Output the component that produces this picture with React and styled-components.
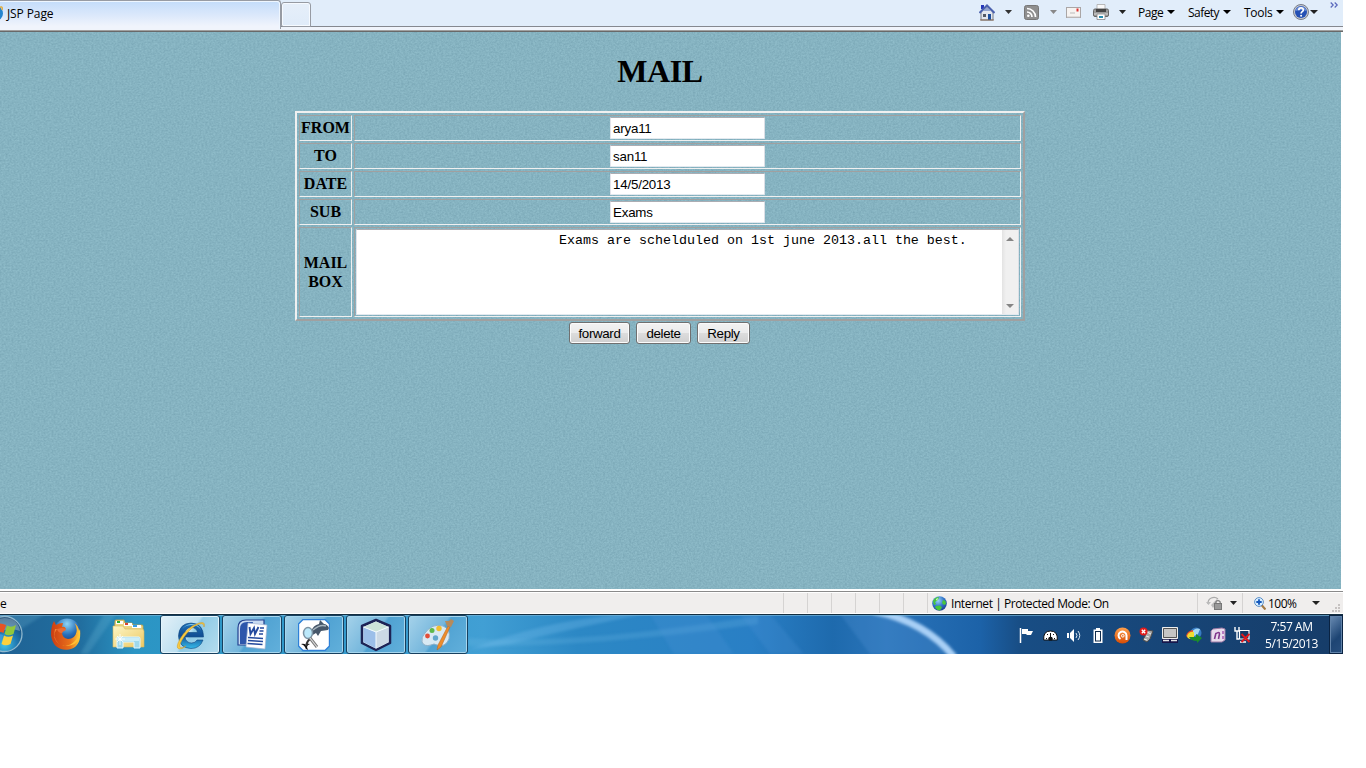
import React from 'react';
import styled, { createGlobalStyle } from 'styled-components';

const Global = createGlobalStyle`
  * { box-sizing: border-box; }
  body { margin: 0; background: #fff; overflow: hidden; }
  svg { display: block; flex: none; }
`;
const ui = '"Open Sans", "Noto Sans", sans-serif';

const Screen = styled.div`
  width: 1343px; height: 654px; display: flex; flex-direction: column; overflow: hidden;
  font-family: ${ui}; font-size: 12px; color: #000;
`;

/* Browser chrome */
const TabBar = styled.header`
  height: 32px; flex: none; display: flex; align-items: flex-start;
  background: linear-gradient(#e1edfa 0 26px, #85888f 26px 27px, #f0f4fb 27px 30px, #a0a0a0 30px 31px, #696969 31px 32px);
`;
const Tab = styled.div`
  width: 281px; height: 29px; display: flex; align-items: center; padding-bottom: 3px;
  border-top: 1px solid #979ba3; border-right: 1px solid #979ba3; border-top-right-radius: 3px;
  background: linear-gradient(#c3dcfa, #dbe8fb 50%, #f0f4fc 90%);
  box-shadow: inset -1px 1px #eef6ff;
`;
const TabTitle = styled.span`
  font-size: 12px; letter-spacing: -0.1px; margin-left: 4px;
`;
const NewTab = styled.div`
  width: 30px; height: 25px; margin-top: 2px; border: 1px solid #979ba3; border-radius: 3px 3px 0 2px;
  background: linear-gradient(#e6effa, #dfebf9); box-shadow: inset 0 0 0 1px #f6faff;
`;
const Tools = styled.nav`
  margin-left: auto; height: 26px; display: flex; align-items: center; padding-right: 4px;
`;
const Tool = styled.div`
  width: ${p => p.$w}px; height: 26px; display: flex; align-items: center; flex: none; margin-right: ${p => p.$mr || 0}px;
  padding-bottom: 2px; white-space: nowrap; letter-spacing: ${p => p.$ls || 0}px; justify-content: ${p => (p.$text ? 'space-between' : 'flex-start')};
`;
const Overflow = styled(Tool)` align-items: flex-start; padding-top: 2px; `;

/* Web page */
const Page = styled.main`
  height: 557px; flex: none; width: 1341px; padding: 21px 21px 0 0; position: relative;
  background: #86b3c1; font-family: "Liberation Serif", serif; font-size: 16px; text-align: center;
`;
const Weave = styled.svg`
  position: absolute; inset: 0; width: 1341px; height: 557px;
`;
const Body = styled.div` position: relative; `;
const Title = styled.h1` margin: 0; font-size: 32px; line-height: 37px; font-weight: bold; letter-spacing: -0.4px; `;
const MailTable = styled.table`
  margin: 21px auto 0; width: 730px; table-layout: fixed; border-collapse: separate; border-spacing: 2px;
  border: 2px solid; border-color: #f0f0f0 #a0a0a0 #a0a0a0 #f0f0f0;
`;
const Label = styled.th`
  width: 53px; padding: ${p => (p.$tall ? '1px 0' : '0 0 2px')}; height: ${p => (p.$tall ? 90 : 26)}px; line-height: 19px; font-size: 16px;
  border: 1px solid; border-color: #a0a0a0 #f0f0f0 #f0f0f0 #a0a0a0;
`;
const Cell = styled.td`
  padding: 1px; border: 1px solid; border-color: #a0a0a0 #f0f0f0 #f0f0f0 #a0a0a0;
`;
const Field = styled.input`
  display: block; margin: 0 0 0 254px; width: 155px; height: 22px; padding: 1px 2px; outline: 0; background: #fff;
  border: 1px solid; border-color: #abadb3 #dbdfe6 #e3e9ef #e2e3ea; border-radius: 1px;
  font: 13.333px "Liberation Sans", Arial, sans-serif; letter-spacing: -0.2px; color: #000;
`;
const MailBody = styled.div`
  height: 86px; display: flex; background: #fff; border: 1px solid; border-color: #abadb3 #dbdfe6 #e3e9ef #e2e3ea;
`;
const MailText = styled.pre`
  flex: 1; margin: 0; padding: 3px 2px; text-align: left; line-height: 15px;
  font-family: "Liberation Mono", "Courier New", monospace; font-size: 13.333px;
`;
const ScrollBar = styled.div`
  width: 16px; display: flex; flex-direction: column; justify-content: space-between; align-items: center;
  padding: 7px 0 6px; background: linear-gradient(90deg, #e3e3e3, #f0f0f0 25%, #f0f0f0);
`;
const Actions = styled.div`
  display: flex; justify-content: center; gap: 6px; margin-top: 1px; padding-right: 1px;
`;
const Button = styled.button`
  width: ${p => p.$w}px; height: 22px; padding: 0; border: 1px solid #707070; border-radius: 3px;
  background: linear-gradient(#f2f2f2, #ebebeb 49%, #dddddd 50%, #cfcfcf); box-shadow: inset 0 0 0 1px #fbfbfb;
  font: 13.333px "Liberation Sans", Arial, sans-serif; letter-spacing: -0.35px; color: #000;
`;

/* Status bar */
const Status = styled.footer`
  height: 25px; flex: none; display: flex; padding-top: 4px;
  background: linear-gradient(#fff 0 2px, #8a8a8a 2px 3px, #fff 3px 4px, #f0eeed 4px 24px, #fff 24px);
`;
const StatusCell = styled.div`
  height: 20px; width: ${p => p.$w}px; flex: none; display: flex; align-items: center; border-right: 1px solid #d5d3d2;
  white-space: nowrap; padding-left: ${p => p.$pl || 0}px; gap: ${p => p.$gap || 0}px; letter-spacing: ${p => p.$ls || 0}px;
  &:last-child { border-right: 0; }
`;
const ZoomValue = styled.span` width: 42px; `;
const Corner = styled.div` height: 20px; display: flex; align-items: flex-end; margin-left: 9px; `;

/* Taskbar */
const TaskBar = styled.footer`
  height: 40px; flex: none; display: flex; position: relative; overflow: hidden; background: #1f6fb4;
`;
const Wallpaper = styled.svg` position: absolute; inset: 0; `;
const TaskItems = styled.div` position: relative; display: flex; align-items: center; width: 1014px; `;
const Launcher = styled.div` width: ${p => p.$w}px; flex: none; display: flex; justify-content: ${p => p.$start ? 'flex-start' : 'center'}; `;
const TaskButton = styled.div`
  width: 60px; height: 39px; margin: 1px 2px 0 0; flex: none; display: flex; align-items: center; justify-content: center;
  border: 1px solid #17405f; border-radius: 3px;
  background: ${p => p.$active
    ? 'linear-gradient(125deg, #e4f1f8, #bcdff0 48%, #8fcbe6 52%, #b5dcee)'
    : 'linear-gradient(125deg, #a5d2ea, #74b6dc 48%, #50a2d2 52%, #62b0db)'};
  box-shadow: inset 0 0 0 1px ${p => (p.$active ? '#e3f4fc' : '#a6d6ee')};
`;
const Tray = styled.div` position: relative; display: flex; align-items: center; padding-top: 2px; width: 240px; `;
const TrayIcon = styled.div` width: 24px; height: 18px; display: flex; align-items: center; justify-content: center; `;
const Clock = styled.div`
  position: relative; width: 76px; color: #fff; text-align: center; line-height: 17px; padding: 4px 1px 0 0; font-size: 12px; letter-spacing: -0.45px;
`;
const ShowDesktop = styled.div`
  position: relative; width: 14px; height: 39px; margin: 1px 0 0 -1px; border: 1px solid #0a2342;
  box-shadow: inset 0 0 0 1px #5f81a8; background: linear-gradient(135deg, #6b8db4, #1d4473 60%, #284f7e);
`;

const Arrow = ({ fill = '#000', w = 7, up = false }) => (
  <svg width={w} height="4" viewBox="0 0 8 4" preserveAspectRatio="none"><path d={up ? 'M0 4h8L4 0z' : 'M0 0h8L4 4z'} fill={fill} /></svg>
);

const HomeIcon = () => (
  <svg width="16" height="17" viewBox="0 0 16 17">
    <path d="M2 8v8h12V8L8 3z" fill="#e4e7ef" stroke="#7b7f88" />
    <path d="M2 1h3v4H2z" fill="#2536b8" />
    <path d="M.5 9 8 1.5 15.500 9" fill="none" stroke="#4a61ae" strokeWidth="2" />
    <path d="M4 7 8 3l4 4z" fill="#93a5d0" />
    <path d="M9 10h3v6H9z" fill="#1d4f9d" /><path d="M4 10h3v3H4z" fill="#555b66" /><path d="M1 16h14" stroke="#8c6f58" />
  </svg>
);
const FeedIcon = () => (
  <svg width="15" height="15" viewBox="0 0 15 15">
    <rect x=".5" y=".5" width="14" height="14" rx="2" fill="#8f8f8f" stroke="#777" />
    <g fill="none" stroke="#fff" strokeWidth="1.700"><path d="M3 7a5 5 0 0 1 5 5M3 3.500A8.500 8.500 0 0 1 11.500 12" /></g>
    <circle cx="4.300" cy="10.800" r="1.300" fill="#fff" />
  </svg>
);
const MailIcon = () => (
  <svg width="15" height="11" viewBox="0 0 15 11">
    <rect x=".5" y=".5" width="14" height="10" fill="#f6f3f1" stroke="#aaa6a6" />
    <path d="M1 10h13" stroke="#c9c5c5" /><path d="M4 6h5" stroke="#bbb" /><rect x="10.500" y="1.500" width="2" height="3" fill="#d33" />
  </svg>
);
const PrinterIcon = () => (
  <svg width="16" height="16" viewBox="0 0 16 16">
    <path d="M4 .5h8v6H4z" fill="#fafafa" stroke="#aaa" strokeWidth=".8" />
    <rect x=".5" y="5" width="15" height="7.500" rx="1.500" fill="#999" stroke="#666" />
    <path d="M3 5h10v3H3z" fill="#444" /><path d="M1 10h14" stroke="#ddd" />
    <path d="M4 10h8v5.500H4z" fill="#fff" stroke="#888" strokeWidth=".8" /><path d="M6 12h4v2H6z" fill="#278caf" />
  </svg>
);
const HelpIcon = () => (
  <svg width="16" height="16" viewBox="0 0 16 16">
    <circle cx="8" cy="8" r="7.500" fill="#c4c8d0" stroke="#777d89" /><circle cx="8" cy="8" r="6" fill="#2450b4" />
    <path d="M2.500 7a5.600 5.600 0 0 1 11 0q-5-2-11 0z" fill="#6a8fdb" />
    <path d="M5.800 6.200c0-3 4.600-3 4.500-.2 0 1.700-2.200 1.700-2.200 3.400" fill="none" stroke="#fff" strokeWidth="1.700" /><circle cx="8.100" cy="11.700" r="1" fill="#fff" />
  </svg>
);
const ChevronsIcon = () => (
  <svg width="9" height="6" viewBox="0 0 9 6"><path d="M.7.500 3.200 3 .7 5.500M4.700.500 7.200 3 4.700 5.500" fill="none" stroke="#5a68bc" strokeWidth="1.200" /></svg>
);
const PageIcon = () => (
  <svg width="3" height="15" viewBox="13 0 3 15"><circle cx="8.500" cy="7.500" r="6" fill="none" stroke="#2384cf" strokeWidth="3" /><path d="M12 2q4-3 3 2" stroke="#e1aa35" fill="none" strokeWidth="1.500" /></svg>
);
const GlobeIcon = () => (
  <svg width="15" height="15" viewBox="0 0 15 15">
    <defs><radialGradient id="globe" cx=".4" cy=".3" r=".8"><stop offset="0" stopColor="#9cd4f8" /><stop offset=".5" stopColor="#3478cb" /><stop offset="1" stopColor="#162e82" /></radialGradient></defs>
    <circle cx="7.500" cy="7.500" r="7.300" fill="url(#globe)" />
    <path d="M1 5q2-4 6-4l-1 3-3 2 1 2-2 1zM11 4l2.500 1 .5 3-2 1-2-2zM4 10l4-.5 2 2-2 3q-3 0-5-3z" fill="#48c63b" /><path d="M4 3l2-1-1 3z" fill="#eaffdb" />
  </svg>
);
const BlockedIcon = () => (
  <svg width="17" height="14" viewBox="0 0 17 14">
    <path d="M2 8a6 6 0 0 1 10-5" fill="none" stroke="#aaa" strokeWidth="1.200" /><path d="M0 6l2.500 3L5 6M5 9l6-6v4L7 12z" fill="#bbb" />
    <path d="M9.800 8V6q2-3 4.400 0v2" fill="none" stroke="#888" strokeWidth="1.300" /><rect x="8.500" y="7.500" width="7" height="6" fill="#999" stroke="#777" />
  </svg>
);
const ZoomIcon = () => (
  <svg width="12" height="13" viewBox="0 0 12 13">
    <path d="M7.500 8l4 4.500" stroke="#a37a45" strokeWidth="2.200" /><circle cx="5" cy="5" r="4.400" fill="#d8efff" stroke="#5b8ec7" />
    <path d="M5 2.300v5.400M2.300 5h5.400" stroke="#1558bc" strokeWidth="1.800" />
  </svg>
);
const Grip = () => (
  <svg width="9" height="9" viewBox="0 0 9 9"><path d="M7 1h2M7 4h2M7 7h2M4 4h2M4 7h2M1 7h2" stroke="#b8b4b2" strokeWidth="1.700" /></svg>
);

const StartOrb = () => (
  <svg width="23" height="38" viewBox="14 0 23 38">
    <defs><radialGradient id="orb" cx=".5" cy=".8" r=".8"><stop offset="0" stopColor="#43c5e9" /><stop offset=".45" stopColor="#1f78b0" /><stop offset="1" stopColor="#153e67" /></radialGradient></defs>
    <circle cx="18.500" cy="19" r="17.500" fill="url(#orb)" stroke="#8fb8ce" strokeWidth="1.300" />
    <path d="M3 15Q5 3 18.500 3T34 16q-7-3-15.500-1T3 15z" fill="#c5d9e4" opacity=".4" />
    <path d="M8 10q6-3 12 0l-2.500 8q-5-2-11 0z" fill="#e85324" /><path d="M21 10.500q4 2.500 9-.5l-2.500 9q-5 2.500-9 0z" fill="#91c83c" />
    <path d="M6.500 20q5-2 10.500 0l-2.500 8q-5-2-10 0z" fill="#3b98dd" /><path d="M18 20.500q4 2.500 9 0l-2.500 8.500q-5 2.500-9 0z" fill="#fbd13d" />
  </svg>
);
const FirefoxIcon = () => (
  <svg width="32" height="32" viewBox="0 0 32 32">
    <defs>
      <radialGradient id="ffb" cx=".5" cy=".2" r=".8"><stop offset="0" stopColor="#8fd5f4" /><stop offset=".5" stopColor="#2870bb" /><stop offset="1" stopColor="#142a68" /></radialGradient>
      <linearGradient id="fff" x1="0" y1="0" x2="1" y2="0"><stop offset="0" stopColor="#cb3d12" /><stop offset=".65" stopColor="#e8701b" /><stop offset="1" stopColor="#ffd23c" /></linearGradient>
    </defs>
    <circle cx="17" cy="14" r="13.500" fill="url(#ffb)" />
    <path d="M4 3q1 2 2 4 3-2 7-2l-1 4q3-1 4 2-2 2-4 3 0 6 6 7 7 0 8.500-7 .8-5-2-9 4 3 4.500 8l1-2q2 18-11 20.500Q3 33 1 17 1 8 4 3z" fill="url(#fff)" />
    <path d="M27 9q3 8-2 14-6 6-13 4 12 3 17-6 1-6-2-12z" fill="#ffc234" /><path d="M5 11q-3 10 4 15-8-8-2-15z" fill="#f08433" />
    <path d="M7 11l5-1q3 0 4 2-3 1-4 3-4 0-5-4z" fill="#eb6b32" />
  </svg>
);
const FolderIcon = () => (
  <svg width="33" height="30" viewBox="0 0 33 30">
    <defs><linearGradient id="fold" x1="0" y1="0" x2="1" y2="1"><stop offset="0" stopColor="#fdf6c6" /><stop offset="1" stopColor="#ecc963" /></linearGradient></defs>
    <path d="M3 2q0-1 1-1h8l1 3h7l1 2h9q1 0 1 1v20H2z" fill="#edd683" stroke="#c5a348" strokeWidth=".8" />
    <path d="M1 7h10l2 3h18l1 2v16H1z" fill="url(#fold)" stroke="#d6b55b" strokeWidth=".6" />
    <path d="M4 2h7v3H4zM12 4h8v3h-8zM20 6h9v3h-9z" fill="#fff" />
    <path d="M5 2h3v2H5z" fill="#2dab33" /><path d="M13 4h3v2h-3z" fill="#dc462f" /><path d="M21 6h4v2h-4z" fill="#379de6" />
    <path d="M5 18h22q1 0 1 2v9h-6v-6H11v6H5z" fill="#9ed8ec" stroke="#e1f6ff" /><path d="M6 19h21v3H6z" fill="#cbeef8" />
    <path d="M8 15v11M3 20h10M5 17l6 6M11 17l-6 6" stroke="#fff" strokeWidth=".8" />
  </svg>
);
const ExplorerIcon = () => (
  <svg width="32" height="32" viewBox="0 0 32 32">
    <defs><linearGradient id="ie" x1="0" y1="0" x2="0" y2="1"><stop offset="0" stopColor="#1d72b8" /><stop offset=".5" stopColor="#124e94" /><stop offset="1" stopColor="#36bceb" /></linearGradient></defs>
    <path d="M29.500 18H11q1 6 6.500 6 4 0 5.500-3h6q-3 8.500-12 8.500Q5 29 4.500 17 5 4.500 17 4q12.500.500 12.500 14zM11 13.500h12.500q-1-5-6-5-5.500 0-6.500 5z" fill="url(#ie)" stroke="#0e4580" strokeWidth=".6" />
    <path d="M7 12q3-6 10-7 8 0 10 6-3-5-10-5T7 12z" fill="#85cdf0" />
    <path d="M30 8q2-6-5-4Q13 8 6 20q-5 9-1 10 3 .5 7-3-5 3-6 1Q5 25 10 18 17 8 25 5q5-1.500 5 3z" fill="#f7ca42" stroke="#cf9827" strokeWidth=".5" />
  </svg>
);
const WordIcon = () => (
  <svg width="31" height="31" viewBox="0 0 31 31">
    <path d="M1 26V9Q1 1 9 1h18v25z" fill="#c7daf2" stroke="#24418f" strokeWidth="1.200" /><path d="M3 25V10q0-7 7-7h6l-5 22z" fill="#2d56ab" />
    <path d="M11 4l19 2-2 24-19-2z" fill="#fff" stroke="#a3b5d3" strokeWidth=".7" />
    <path d="M12.500 8l1 7L17 9l1 6L21.500 8" fill="none" stroke="#244a9d" strokeWidth="1.900" /><path d="M23 9h4M22.500 12h4M22 15h4M11 18.500l15 1M11 21.500l15 1M10.500 24.500l15 1" stroke="#244a9d" strokeWidth="1.600" />
  </svg>
);
const DolphinIcon = () => (
  <svg width="32" height="32" viewBox="0 0 32 32">
    <path d="M5 .5h22L31.500 5v22L27 31.500H5L.5 27V5z" fill="#fff" stroke="#2e80d8" strokeWidth="1.400" />
    <path d="M13 13q2-7 8-8l1-4 4 4q3 0 5 4l-1 2-7 1-3 5-2-3-5 3z" fill="#47576a" />
    <path d="M15 11q7-6 13-4" stroke="#a7b5be" strokeWidth="1.500" fill="none" />
    <path d="M3 25q3-1 5 1 2-2 4-1-3 1-3 3l1 3q-3-1-3-3-1-2-4-3z" fill="#111" /><path d="M8 27q1-5 4-7" stroke="#333" strokeWidth="2" fill="none" />
    <ellipse cx="10" cy="14" rx="4.500" ry="5.500" fill="#bce9fa" stroke="#7d94a4" strokeWidth="1.500" />
    <path d="M12 19l7 9" stroke="#777" strokeWidth="3" /><path d="M12 19l7 9" stroke="#ddd" strokeWidth="1.200" />
  </svg>
);
const CubeIcon = () => (
  <svg width="32" height="34" viewBox="0 0 32 34">
    <path d="M16 2l14 6v17l-14 7-14-7V8z" fill="#dce9f4" stroke="#1d2355" strokeWidth="2.500" strokeLinejoin="round" />
    <path d="M3.500 9L16 14v16.500L3.500 24z" fill="#9cbfe9" /><path d="M28.500 9L16 14v16.500L28.500 24z" fill="#ccd9e5" /><path d="M16 3.500L28.500 9 16 14 3.500 9z" fill="#cce3d9" />
    <path d="M3.500 9L16 14l12.500-5M16 14v16" fill="none" stroke="#f4fbff" />
  </svg>
);
const PaintIcon = () => (
  <svg width="34" height="34" viewBox="0 0 34 34">
    <path d="M4 15Q11 5 22 8q8 3 6 13-4 9-12 6-3-2-6 0-7 2-9-3-1-5 3-9z" fill="#d8e9f3" stroke="#8db0c8" />
    <circle cx="14.500" cy="20" r="2.700" fill="#62a7cd" /><circle cx="6.500" cy="18" r="2.400" fill="#e34d37" /><circle cx="11" cy="12.500" r="2.500" fill="#5db84b" /><circle cx="18" cy="10.500" r="2.700" fill="#f3bd2f" />
    <path d="M27 8l2 1-9 20-4 3 1-5z" fill="#ed8c2c" stroke="#b46420" strokeWidth=".5" /><path d="M26 8l-2-5 4 0 2-2 3 2-3 6z" fill="#b58a5c" />
  </svg>
);

const FlagIcon = () => <svg width="15" height="16" viewBox="0 0 15 16"><path d="M1.500 1v15" stroke="#fff" strokeWidth="1.500" /><path d="M3 2h6v2h5l-2 4H8l-1-1H3z" fill="#fff" /></svg>;
const GaugeIcon = () => <svg width="15" height="11" viewBox="0 0 15 11"><path d="M.7 10Q0 1 7.500 1t6.800 9z" fill="#fff" stroke="#111" /><path d="M6 10q-1-3 1.500-3T9 10zM7.500 7V3M3 8l1 1M4 4l1 1M11 4l-1 1M12 8l-1 1" fill="#111" stroke="#111" /></svg>;
const SpeakerIcon = () => <svg width="16" height="15" viewBox="0 0 16 15"><path d="M1 5h2v5H1zM4 5l4-4v13l-4-4z" fill="#fff" /><path d="M10 5q2 2.500 0 5M12 3q3.500 4.500 0 9" stroke="#dce8f2" fill="none" /></svg>;
const BatteryIcon = () => <svg width="10" height="15" viewBox="0 0 10 15"><path d="M3 0h4v1.500h2.500V15h-9V1.500H3z" fill="#fff" /><path d="M2 3h6v10.500H2z" fill="#102c4c" /><path d="M3 4h4v8.500H3z" fill="#fff" /></svg>;
const AvastIcon = () => (
  <svg width="17" height="17" viewBox="0 0 17 17">
    <defs><linearGradient id="av" x1="0" y1="0" x2="0" y2="1"><stop offset="0" stopColor="#ffa04b" /><stop offset="1" stopColor="#d74c05" /></linearGradient></defs>
    <circle cx="8.500" cy="8.500" r="8" fill="url(#av)" /><path d="M12.500 13V8.500a4 4 0 1 0-6 3.500" fill="none" stroke="#fff" strokeWidth="2" /><circle cx="8.800" cy="8.800" r="1.300" fill="none" stroke="#fff" />
  </svg>
);
const UsbIcon = () => <svg width="15" height="16" viewBox="0 0 15 16"><path d="M8 3l6 1-3 8-3 3-4-2 2-4z" fill="#a9a9a9" stroke="#4d4d4d" /><path d="M5 12l3 1M8 5l4 2M7 9l3 1" stroke="#eee" /><circle cx="4.500" cy="4.500" r="4" fill="#e11a1a" /><path d="M2.800 2.800l3.400 3.400M6.200 2.800L2.800 6.200" stroke="#fff" strokeWidth="1.400" /></svg>;
const LaptopIcon = () => <svg width="16" height="16" viewBox="0 0 16 16"><path d="M.5.500h15v11H.5z" fill="#c2c2c2" stroke="#eee" /><path d="M1.500 1.500h13v9h-13z" fill="#c5c5c5" stroke="#555" /><path d="M0 12h16v4H0z" fill="#17174b" /><path d="M1 13.500h6M9 13.500h6" stroke="#e4e4e4" strokeWidth="1.700" /></svg>;
const DownloadIcon = () => <svg width="17" height="16" viewBox="0 0 17 16"><circle cx="10" cy="6" r="5.500" fill="#377bc3" /><path d="M6 5q3-5 8-3l-2 5-4 2z" fill="#a4d6f2" /><path d="M0 9q1-5 7-6v8q-5 1-7-2z" fill="#e44c2c" /><path d="M1 9q2-5 7-4v7q-6 1-7-3z" fill="#f1dc32" /><path d="M3 10l7 0V7l6 4-5 5v-2q-6 0-8-4z" fill="#1b8d2b" /></svg>;
const NoteIcon = () => <svg width="16" height="16" viewBox="0 0 16 16"><path d="M3 2l9-1 3 1v11l-3 2H1V4z" fill="#e9dcec" stroke="#9c7aa5" /><path d="M4.500 12l1.500-6M5.500 7q4-3 4 0l-1 5" fill="none" stroke="#82398d" strokeWidth="1.600" /><path d="M13 4v3M13 9v3" stroke="#b77bc0" strokeWidth="2" /></svg>;
const NetworkIcon = () => <svg width="16" height="16" viewBox="0 0 16 16"><path d="M5.500 3.500h9.500v8.500H5.500z" fill="#153a66" stroke="#fff" strokeWidth="1.200" /><path d="M1 0v4h4V0M3 4v8h2M6 15h6" fill="none" stroke="#fff" strokeWidth="1.400" /><path d="M7.500 7l8 8M15.500 7l-8 8" stroke="#e0181c" strokeWidth="1.900" /></svg>;

const trayIcons = [FlagIcon, GaugeIcon, SpeakerIcon, BatteryIcon, AvastIcon, UsbIcon, LaptopIcon, DownloadIcon, NoteIcon, NetworkIcon];
const windowsOpen = [ExplorerIcon, WordIcon, DolphinIcon, CubeIcon, PaintIcon];
const fields = [['FROM', 'arya11'], ['TO', 'san11'], ['DATE', '14/5/2013'], ['SUB', 'Exams']];
const message = ' '.repeat(25) + 'Exams are schelduled on 1st june 2013.all the best.';

const TaskbarGlass = () => (
  <Wallpaper width="1343" height="40" viewBox="0 0 1343 40">
    <defs>
      <linearGradient id="sky"><stop offset="0" stopColor="#1f6294" /><stop offset=".06" stopColor="#216e9f" /><stop offset=".1" stopColor="#2b95c4" /><stop offset=".25" stopColor="#3399cb" /><stop offset=".36" stopColor="#419fd4" /><stop offset=".43" stopColor="#2c88c5" /><stop offset=".56" stopColor="#297fc5" /><stop offset=".62" stopColor="#1e6aad" /><stop offset=".66" stopColor="#2a74ba" /><stop offset=".73" stopColor="#1c62a8" /><stop offset=".76" stopColor="#184d84" /><stop offset="1" stopColor="#163c68" /></linearGradient>
      <filter id="soft" x="-20%" y="-50%" width="140%" height="200%" colorInterpolationFilters="sRGB"><feGaussianBlur stdDeviation="1.800" /></filter>
    </defs>
    <path d="M0 0h1343v40H0z" fill="url(#sky)" />
    <g filter="url(#soft)">
      <path d="M0 28L45 0H0zM80 40l24-40h12L88 40z" fill="#79c6dd" opacity=".22" />
      <path d="M468 36Q540 8 620 0h24Q560 17 510 30z" fill="#7cc1ed" opacity=".3" />
      <path d="M468 24q100 8 290-22v8q-170 24-290 22z" fill="#7cc1ed" opacity=".2" />
      <path d="M650 0h56l28 40h-60zM770 0h-30l30 40h34z" fill="#5197dc" opacity=".22" />
      <path d="M840 0h45q40 10 65 40h-80z" fill="#5492d4" opacity=".28" />
      <path d="M874-3q52 11 80 46" fill="none" stroke="#a9d0f6" strokeWidth="7" />
    </g>
    <path d="M0 .5h1343" stroke="#142e40" /><path d="M0 1.500h1343" stroke="#76b3d6" opacity=".7" />
  </Wallpaper>
);

export default function App() {
  return (
    <>
      <Global />
      <Screen>
        <TabBar>
          <Tab><PageIcon /><TabTitle>JSP Page</TabTitle></Tab>
          <NewTab />
          <Tools>
            <Tool $w={26}><HomeIcon /></Tool>
            <Tool $w={19}><Arrow fill="#333" /></Tool>
            <Tool $w={26}><FeedIcon /></Tool>
            <Tool $w={16}><Arrow fill="#888" /></Tool>
            <Tool $w={27}><MailIcon /></Tool>
            <Tool $w={26}><PrinterIcon /></Tool>
            <Tool $w={19}><Arrow fill="#222" /></Tool>
            <Tool $w={37} $mr={13} $text $ls={-0.45}>Page<Arrow w={8} /></Tool>
            <Tool $w={43} $mr={13} $text $ls={-0.55}>Safety<Arrow w={8} /></Tool>
            <Tool $w={40} $mr={9} $text $ls={-0.3}>Tools<Arrow w={8} /></Tool>
            <Tool $w={17}><HelpIcon /></Tool>
            <Tool $w={20}><Arrow fill="#222" w={8} /></Tool>
            <Overflow $w={9}><ChevronsIcon /></Overflow>
          </Tools>
        </TabBar>
        <Page>
          <Weave>
            <filter id="weave" x="0" y="0" width="100%" height="100%" colorInterpolationFilters="sRGB">
              <feTurbulence type="fractalNoise" baseFrequency=".5 .6" numOctaves="2" seed="4" stitchTiles="stitch" />
              <feColorMatrix values=".12 0 0 0 .465  .12 0 0 0 .642  .11 0 0 0 .702  0 0 0 0 1" />
            </filter>
            <rect width="1341" height="557" filter="url(#weave)" />
          </Weave>
          <Body>
            <Title>MAIL</Title>
            <MailTable>
              <tbody>
                {fields.map(([label, value]) => (
                  <tr key={label}><Label>{label}</Label><Cell><Field defaultValue={value} /></Cell></tr>
                ))}
                <tr>
                  <Label $tall>MAIL<br />BOX</Label>
                  <Cell>
                    <MailBody>
                      <MailText>{message}</MailText>
                      <ScrollBar><Arrow up fill="#858585" w={8} /><Arrow fill="#858585" w={8} /></ScrollBar>
                    </MailBody>
                  </Cell>
                </tr>
              </tbody>
            </MailTable>
            <Actions><Button $w={61}>forward</Button><Button $w={55}>delete</Button><Button $w={53}>Reply</Button></Actions>
          </Body>
        </Page>
        <Status>
          <StatusCell $w={784}>e</StatusCell>
          {[0, 1, 2, 3, 4, 5].map(i => <StatusCell key={i} $w={24} />)}
          <StatusCell $w={270} $pl={4} $gap={4} $ls={-0.44}><GlobeIcon /><span>Internet | Protected Mode: On</span></StatusCell>
          <StatusCell $w={45} $pl={8} $gap={7}><BlockedIcon /><Arrow fill="#222" /></StatusCell>
          <StatusCell $w={100} $pl={11} $gap={2} $ls={-0.5}>
            <ZoomIcon /><ZoomValue>100%</ZoomValue><Arrow fill="#222" w={8} /><Corner><Grip /></Corner>
          </StatusCell>
        </Status>
        <TaskBar>
          <TaskbarGlass />
          <TaskItems>
            <Launcher $w={35} $start><StartOrb /></Launcher>
            <Launcher $w={62}><FirefoxIcon /></Launcher>
            <Launcher $w={63}><FolderIcon /></Launcher>
            {windowsOpen.map((Icon, i) => <TaskButton key={i} $active={i === 0}><Icon /></TaskButton>)}
          </TaskItems>
          <Tray>{trayIcons.map((Icon, i) => <TrayIcon key={i}><Icon /></TrayIcon>)}</Tray>
          <Clock>7:57 AM<br />5/15/2013</Clock>
          <ShowDesktop />
        </TaskBar>
      </Screen>
    </>
  );
}
